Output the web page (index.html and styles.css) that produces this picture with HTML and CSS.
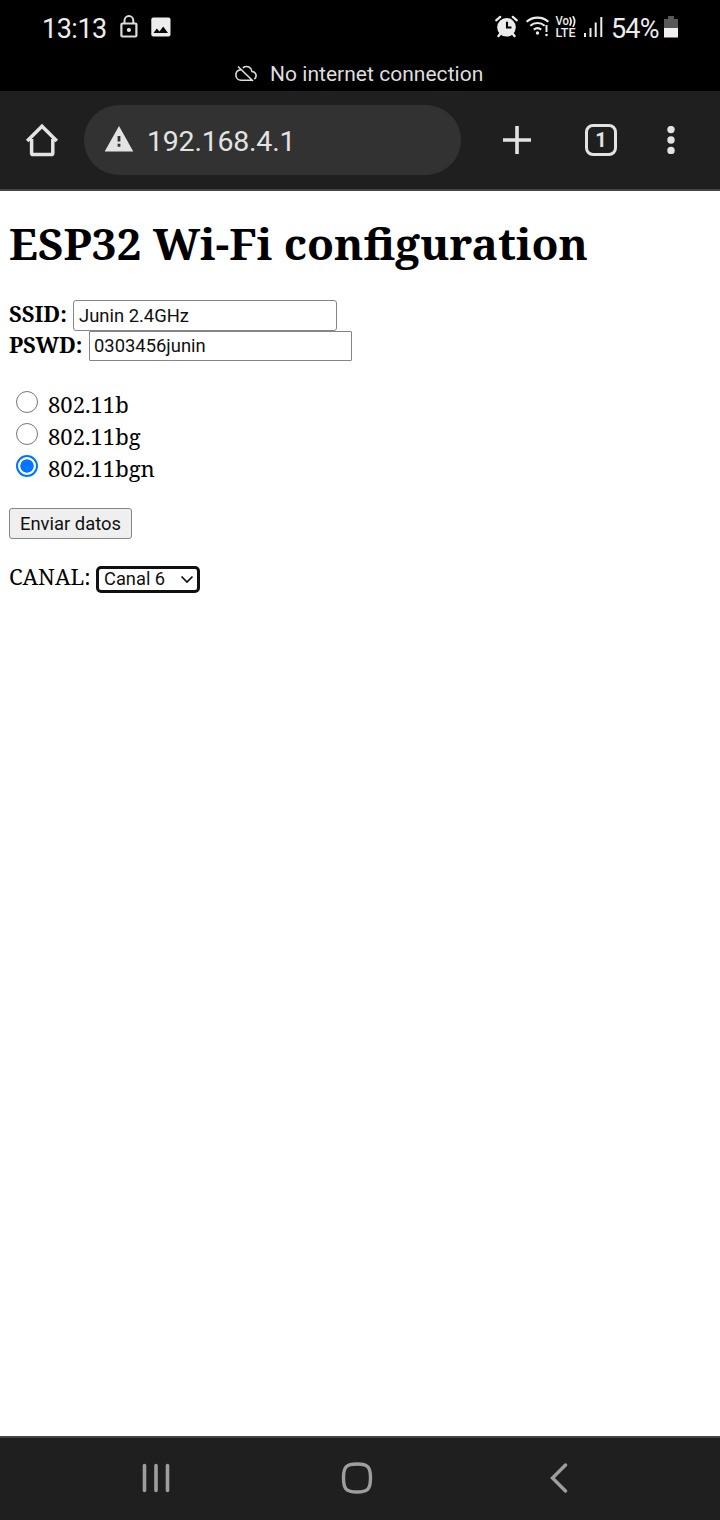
FILE: index.html
```html
<!DOCTYPE html>
<html lang="en">
<head>
<meta charset="utf-8">
<title>ESP32 Wi-Fi configuration</title>
<link rel="stylesheet" href="styles.css">
</head>
<body>
<header class="status">
  <div class="status-left">
    <span class="clock">13:13</span>
    <svg class="lock" width="18" height="24" viewBox="120 15 18 24"><path d="M124.500 23v-2.500a4.400 4.400 0 0 1 8.800 0V23" fill="none" stroke="#dcdcdc" stroke-width="2"/><rect x="121.400" y="23.500" width="15" height="13" rx="1" fill="none" stroke="#dcdcdc" stroke-width="2.200"/><circle cx="128.900" cy="30" r="2.100" fill="#e6e6e6"/></svg>
    <svg class="photo" width="20" height="20" viewBox="0 0 20 20"><rect x=".3" y=".5" width="19.200" height="19" rx="2" fill="#ededed"/><path d="M2.500 16l3.300-4.500 2.700 3 3.700-5 4.800 6.500z" fill="#080808"/></svg>
  </div>
  <div class="status-right">
    <svg width="110" height="26" viewBox="494 14 110 26">
      <g fill="none" stroke="#ececec" stroke-linecap="round">
        <path d="M496.200 20.300l4-3.500M516.800 20.300l-4-3.500" stroke-width="2.200"/>
        <path d="M500.500 33.500l-2 2.500M512.500 33.500l2 2.500" stroke-width="2.400"/>
        <path d="M526.600 21.700a16.500 16.500 0 0 1 21.800 0M530.300 25.700a11 11 0 0 1 14.400 0M533.800 29.600a5.800 5.800 0 0 1 7.400 0" stroke-width="2.100" stroke-linecap="butt"/>
        <path d="M546.500 25v7" stroke-width="2" stroke-linecap="butt"/>
        <path d="M570 17.800q2.100 3.700 0 7.200M573.200 16.800q3 4.700 0 9.400" stroke-width="1.700"/>
      </g>
      <circle cx="506.500" cy="27.300" r="9.300" fill="#ececec"/>
      <path d="M507 21.700v5.800h4.500" fill="none" stroke="#000" stroke-width="2.100"/>
      <circle cx="537.500" cy="33" r="1.700" fill="#ececec"/><circle cx="546.500" cy="35" r="1.300" fill="#ececec"/>
      <text class="volte" x="555.500" y="25.200" textLength="13.500" lengthAdjust="spacingAndGlyphs">Vo</text>
      <text class="volte" x="555.500" y="37" textLength="20" lengthAdjust="spacingAndGlyphs">LTE</text>
      <path d="M585 33v4M590.500 28v9M595.700 22.500V37M601.300 17v20" stroke="#ececec" stroke-width="2"/>
    </svg>
    <span class="percent">54%</span>
    <svg class="battery" width="14" height="22" viewBox="0 0 14 22"><path d="M4 0h6v3h4v10H0V3h4z" fill="#585858"/><path d="M0 12h14v9.500H0z" fill="#f0f0f0"/></svg>
  </div>
</header>
<div class="offline">
  <svg width="22" height="18" viewBox="0 0 22 18" fill="none" stroke="#dedede" stroke-width="1.600"><path d="M3 1.500l15 14.500M6 4.700c-3 .2-5.100 2.300-5.100 5.200 0 3.100 2.100 5.400 5.300 5.400h10.500M7.800 2.700C12.500-.2 16.500 2.500 17 6.500c4.500.4 5.300 5.300 2.300 7.600"/></svg>
  <span class="offline-text">No internet connection</span>
</div>
<nav class="toolbar">
  <svg class="home" width="34" height="34" viewBox="25 123 34 34"><path d="M27.200 141L42 126.300l14.800 14.700M31.600 139v14q0 1.600 1.600 1.600h18q1.600 0 1.600-1.600v-14" fill="none" stroke="#e3e3e3" stroke-width="3.500"/></svg>
  <div class="address">
    <svg class="warn" width="30" height="27" viewBox="0 0 30 27"><path d="M15 1l14.300 25.500H.7z" fill="#e3e3e3"/><path d="M15 11v5.500M15 18.700v3" stroke="#323232" stroke-width="2.800"/></svg>
    <span class="url">192.168.4.1</span>
  </div>
  <svg class="plus" width="28" height="28" viewBox="0 0 28 28"><path d="M14 0v28M0 14h28" stroke="#e3e3e3" stroke-width="3.600"/></svg>
  <span class="tabs">1</span>
  <svg class="more" width="8" height="28" viewBox="0 0 8 28" fill="#e3e3e3"><circle cx="4" cy="3.600" r="3.700"/><circle cx="4" cy="14" r="3.700"/><circle cx="4" cy="24.400" r="3.700"/></svg>
</nav>
<main class="page">
  <h1 class="title"><span class="title-text">ESP32 Wi-Fi configuration</span></h1>
  <label class="field ssid"><b>SSID:</b><input class="text" value="Junin 2.4GHz"></label>
  <label class="field pswd"><b>PSWD:</b><input class="text square" value="0303456junin"></label>
  <div class="modes">
    <label class="mode"><input class="radio" type="radio" name="mode"><span class="m1">802.11b</span></label>
    <label class="mode"><input class="radio" type="radio" name="mode"><span class="m2">802.11bg</span></label>
    <label class="mode"><input class="radio" type="radio" name="mode" checked><span class="m3">802.11bgn</span></label>
  </div>
  <button class="send">Enviar datos</button>
  <div class="channel"><span class="canal">CANAL:</span>
    <div class="select"><span class="option">Canal 6</span><svg width="14" height="9" viewBox="0 0 14 9"><path d="M1.500 1.500L7 7l5.500-5.500" fill="none" stroke="#101010" stroke-width="1.700"/></svg></div>
  </div>
</main>
<footer class="navbar">
  <svg class="recents" width="28" height="30" viewBox="0 0 28 30"><path d="M2.500 2.500v25M14 2.500v25M25.500 2.500v25" stroke="#9e9e9e" stroke-width="3.600" stroke-linecap="round"/></svg>
  <svg class="homekey" width="32" height="32" viewBox="0 0 32 32"><path d="M16 2C27 2 29.500 5 29.500 16S27 30 16 30 2.500 27 2.500 16 5 2 16 2z" fill="none" stroke="#9e9e9e" stroke-width="3.400"/></svg>
  <svg class="back" width="18" height="30" viewBox="0 0 18 30"><path d="M15.500 2L2.500 15l13 13" fill="none" stroke="#9e9e9e" stroke-width="3.400" stroke-linecap="round"/></svg>
</footer>
</body>
</html>
```
FILE: styles.css
```css
* { box-sizing: border-box; }
body { margin: 0; width: 720px; height: 1520px; display: flex; flex-direction: column; background: #fff; font-family: Roboto, sans-serif; overflow: hidden; }
svg { flex: none; display: block; }
.status { height: 56px; background: #000; color: #ececec; display: flex; justify-content: space-between; padding: 0 42px 0 42px; }
.status-left, .status-right { display: flex; align-items: center; white-space: nowrap; }
.clock { font-size: 27px; line-height: 54px; padding-top: 2px; width: 78px; letter-spacing: -0.5px; }
.lock { margin-top: -2px; }
.photo { margin-left: 13px; margin-top: -2px; }
.status-right svg { margin-top: -2px; }
.percent { font-size: 27px; line-height: 54px; padding-top: 2px; width: 52px; padding-left: 7px; letter-spacing: -0.8px; }
.status-right .battery { margin-left: 8px; margin-top: -2px; }
.volte { font: 500 12px Roboto, sans-serif; fill: #ececec; }
.offline { height: 35px; background: #000; color: #dedede; display: flex; align-items: center; padding-left: 235px; gap: 13px; font-size: 21px; letter-spacing: 0.03px; white-space: nowrap; }
.toolbar { height: 100px; background: #1f1f1f; border-bottom: 2px solid #454545; display: flex; align-items: center; padding-left: 25px; }
.address { width: 377px; height: 70px; border-radius: 35px; background: #323232; margin-left: 25px; display: flex; align-items: center; padding-left: 20px; gap: 13px; color: #e3e3e3; font-size: 28.500px; letter-spacing: -0.22px; }
.warn { margin-top: -3px; }
.url { padding-top: 2px; }
.plus { margin-left: 42px; }
.tabs { width: 32px; height: 32px; border: 3.500px solid #e3e3e3; border-radius: 8px; margin-left: 54px; color: #e3e3e3; font-size: 20px; font-weight: 700; line-height: 26px; text-align: center; }
.more { margin-left: 50px; }
.page { flex: 1; padding: 0 9px; color: #000; font-family: "Noto Serif", "Droid Serif", "DejaVu Serif Condensed", "DejaVu Serif", serif; font-size: 22.050px; }
.title { margin: 0; height: 109px; padding-top: 21px; font-size: 44.150px; line-height: 62px; white-space: nowrap; }
.field { display: flex; white-space: nowrap; line-height: 27px; }
.field b { width: 64px; }
.pswd b { width: 80px; }
.text { width: 264px; height: 31px; margin: 0; border: 1px solid #858585; border-radius: 3px; padding: 0 5px; background: #fff; color: #101010; font: 18.400px Roboto, sans-serif; }
.text.square { height: 30px; width: 263px; border-radius: 1px; padding: 0 4px 2px; }
.modes { margin-top: 28px; }
.mode { display: flex; height: 32px; line-height: 30px; padding-left: 7px; }
.radio { appearance: none; width: 22px; height: 22px; margin: 2px 10px 0 0; border: 1.500px solid #767676; border-radius: 50%; background: #fff; }
.radio:checked { border: 2px solid #0075ff; background: radial-gradient(circle, #0075ff 6.300px, #fff 7px); }
.send { display: block; margin: 23px 0 0; width: 123px; height: 31px; padding: 0 0 1px; border: 1px solid #858585; border-radius: 3px; background: #efefef; color: #101010; font: 18.400px Roboto, sans-serif; white-space: nowrap; }
.channel { display: flex; margin-top: 27px; line-height: 21px; white-space: nowrap; }
.canal { width: 87px; }
.select { width: 104px; height: 27px; border: 3px solid #101010; border-radius: 5px; display: flex; align-items: center; justify-content: space-between; padding: 0 3px 0 5px; font: 18.300px Roboto, sans-serif; color: #101010; }
.option { margin-top: -2px; }
.navbar { height: 84px; background: #1f1f1f; border-top: 2px solid #454545; display: flex; align-items: center; padding: 0 0 2px 142px; }
.homekey { margin-left: 171px; }
.back { margin-left: 177px; }
```
